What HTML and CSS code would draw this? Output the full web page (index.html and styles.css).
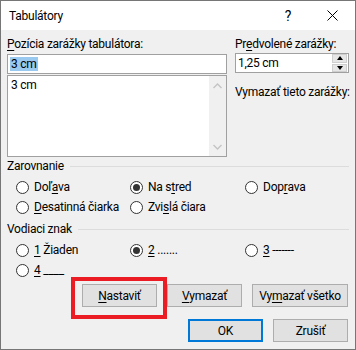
FILE: index.html
```html
<!DOCTYPE html>
<html lang="sk">
<head>
    <meta charset="UTF-8">
    <title>Tabulátory</title>
    <link rel="stylesheet" href="styles.css">
</head>
<body>
    <div class="window">
        <!-- Title bar -->
        <div class="titlebar">
            <span class="title">Tabulátory</span>
            <span class="help">?</span>
            <span class="close">
                <svg width="11" height="11" viewBox="0 0 11 11"><path d="M0.5 0.5 L10.5 10.5 M10.5 0.5 L0.5 10.5" stroke="#000" stroke-width="1"/></svg>
            </span>
        </div>

        <div class="content">
            <div class="top">
                <div class="col-left">
                    <div class="lbl"><u>P</u>ozícia zarážky tabulátora:</div>
                    <div class="textbox"><span class="sel">3 cm</span></div>
                    <div class="listbox">
                        <div class="items">
                            <div class="item">3 cm</div>
                        </div>
                        <div class="scrollbar">
                            <svg width="9" height="6" viewBox="0 0 9 6"><path d="M0.5 5 L4.5 1 L8.5 5" fill="none" stroke="#c4c4c4" stroke-width="1.4"/></svg>
                            <svg width="9" height="6" viewBox="0 0 9 6"><path d="M0.5 1 L4.5 5 L8.5 1" fill="none" stroke="#c4c4c4" stroke-width="1.4"/></svg>
                        </div>
                    </div>
                </div>
                <div class="col-right">
                    <div class="lbl">Pr<u>e</u>dvolené zarážky:</div>
                    <div class="spin">
                        <span class="spin-value">1,25 cm</span>
                        <div class="spin-btns">
                            <div class="spin-btn"><span class="arrow-up"></span></div>
                            <div class="spin-btn"><span class="arrow-down"></span></div>
                        </div>
                    </div>
                    <div class="lbl clear-lbl">Vymazať tieto zarážky:</div>
                </div>
            </div>

            <!-- Alignment -->
            <div class="group">
                <div class="group-head"><span>Zarovnanie</span><span class="rule"></span></div>
                <div class="radios">
                    <div class="radio"><span class="dot"></span>Doľ<u>a</u>va</div>
                    <div class="radio"><span class="dot checked"></span>Na s<u>t</u>red</div>
                    <div class="radio"><span class="dot"></span>Dop<u>r</u>ava</div>
                    <div class="radio"><span class="dot"></span><u>D</u>esatinná čiarka</div>
                    <div class="radio"><span class="dot"></span>Zvi<u>s</u>lá čiara</div>
                </div>
            </div>

            <!-- Leader -->
            <div class="group leader">
                <div class="group-head"><span>Vodiaci znak</span><span class="rule"></span></div>
                <div class="radios">
                    <div class="radio"><span class="dot"></span><u>1</u>&nbsp;Žiaden</div>
                    <div class="radio"><span class="dot checked"></span><u>2</u>&nbsp;.......</div>
                    <div class="radio"><span class="dot"></span><u>3</u>&nbsp;-------</div>
                    <div class="radio"><span class="dot"></span><u>4</u>&nbsp;____</div>
                </div>
            </div>

            <div class="btn-row">
                <button class="btn"><u>N</u>astaviť</button>
                <button class="btn"><u>V</u>ymazať</button>
                <button class="btn wide">Vy<u>m</u>azať všetko</button>
            </div>
            <div class="btn-row second">
                <button class="btn default">OK</button>
                <button class="btn">Zrušiť</button>
            </div>
        </div>

        <!-- annotation frame -->
        <div class="highlight"></div>
    </div>
</body>
</html>
```

FILE: styles.css
```css
* {
    box-sizing: border-box;
}

body {
    margin: 0;
    font-family: Roboto, 'Noto Sans', sans-serif;
    font-size: 12px;
    letter-spacing: -0.25px;
    color: #000;
    background: #fff;
}

u {
    text-decoration: underline;
    text-underline-offset: 2px;
}

.window {
    position: relative;
    width: 356px;
    height: 350px;
    border: 1px solid #767676;
    background: #f0f0f0;
}

/* Title bar */
.titlebar {
    height: 29px;
    background: #fff;
    display: flex;
    align-items: center;
    padding-left: 8px;
}

.title {
    flex: 1;
    font-size: 12px;
}

.help {
    font-size: 14px;
    margin-right: 36px;
}

.close {
    display: flex;
    margin-right: 17px;
}

.content {
    padding: 6px 6px 0 6px;
}

.lbl {
    height: 16px;
    line-height: 16px;
    white-space: nowrap;
}

/* Top controls */
.top {
    display: flex;
    gap: 8px;
}

.col-left {
    width: 220px;
}

.col-left .lbl {
    margin-bottom: 2px;
}

.textbox {
    height: 20px;
    background: #fff;
    border: 1px solid #a0a0a0;
    padding: 2px 2px;
    line-height: 14px;
}

.sel {
    background: #99c9ef;
    display: inline-block;
    padding: 0 1px;
    line-height: 14px;
}

.listbox {
    margin-top: 1px;
    height: 82px;
    background: #fff;
    border: 1px solid #a0a0a0;
    display: flex;
}

.items {
    flex: 1;
    padding: 2px 3px;
}

.item {
    line-height: 15px;
}

.scrollbar {
    width: 17px;
    background: #f0f0f0;
    display: flex;
    flex-direction: column;
    justify-content: space-between;
    align-items: center;
    padding: 7px 0 6px;
}

.col-right {
    width: 114px;
}

.col-right .lbl {
    margin-bottom: 1px;
}

.spin {
    height: 20px;
    background: #fff;
    border: 1px solid #a0a0a0;
    display: flex;
    align-items: center;
    padding-left: 2px;
}

.spin-value {
    flex: 1;
}

.spin-btns {
    width: 15px;
    height: 18px;
    display: flex;
    flex-direction: column;
    gap: 1px;
    margin-right: 1px;
}

.spin-btn {
    flex: 1;
    background: #e6e6e6;
    border: 1px solid #cfcfcf;
    display: flex;
    align-items: center;
    justify-content: center;
}

.arrow-up,
.arrow-down {
    width: 0;
    height: 0;
    border-left: 3.5px solid transparent;
    border-right: 3.5px solid transparent;
}

.arrow-up {
    border-bottom: 4px solid #000;
}

.arrow-down {
    border-top: 4px solid #000;
}

.clear-lbl {
    margin-top: 11px;
}

/* Groups */
.group {
    margin-top: 1px;
}

.group.leader {
    margin-top: 4px;
}

.group-head {
    display: flex;
    align-items: center;
    height: 16px;
    line-height: 16px;
}

.rule {
    flex: 1;
    height: 1px;
    background: #dcdcdc;
    margin-left: 6px;
    margin-right: 0;
}

.radios {
    margin-top: 3px;
    padding-left: 9px;
    display: grid;
    grid-template-columns: 114px 115px auto;
    grid-auto-rows: 20px;
}

.radio {
    display: flex;
    align-items: center;
    white-space: nowrap;
}

.dot {
    width: 13px;
    height: 13px;
    border: 1px solid #333;
    border-radius: 50%;
    background: #fff;
    margin-right: 5px;
    display: flex;
    align-items: center;
    justify-content: center;
    flex-shrink: 0;
}

.dot.checked::after {
    content: "";
    width: 7px;
    height: 7px;
    border-radius: 50%;
    background: #333;
}

/* Buttons */
.btn-row {
    display: flex;
    justify-content: flex-end;
    gap: 10px;
    margin-top: 4px;
    padding-right: 1px;
}

.btn-row.second {
    margin-top: 12px;
}

.btn {
    width: 75px;
    height: 23px;
    margin: 0;
    padding: 0;
    background: #e1e1e1;
    border: 1px solid #adadad;
    font-family: inherit;
    font-size: 12px;
    letter-spacing: inherit;
    color: #000;
}

.btn.wide {
    width: 96px;
}

.btn.default {
    border: 2px solid #0078d7;
}

.highlight {
    position: absolute;
    left: 70px;
    top: 276px;
    width: 96px;
    height: 42px;
    border: 4px solid #ec1c24;
}
```
